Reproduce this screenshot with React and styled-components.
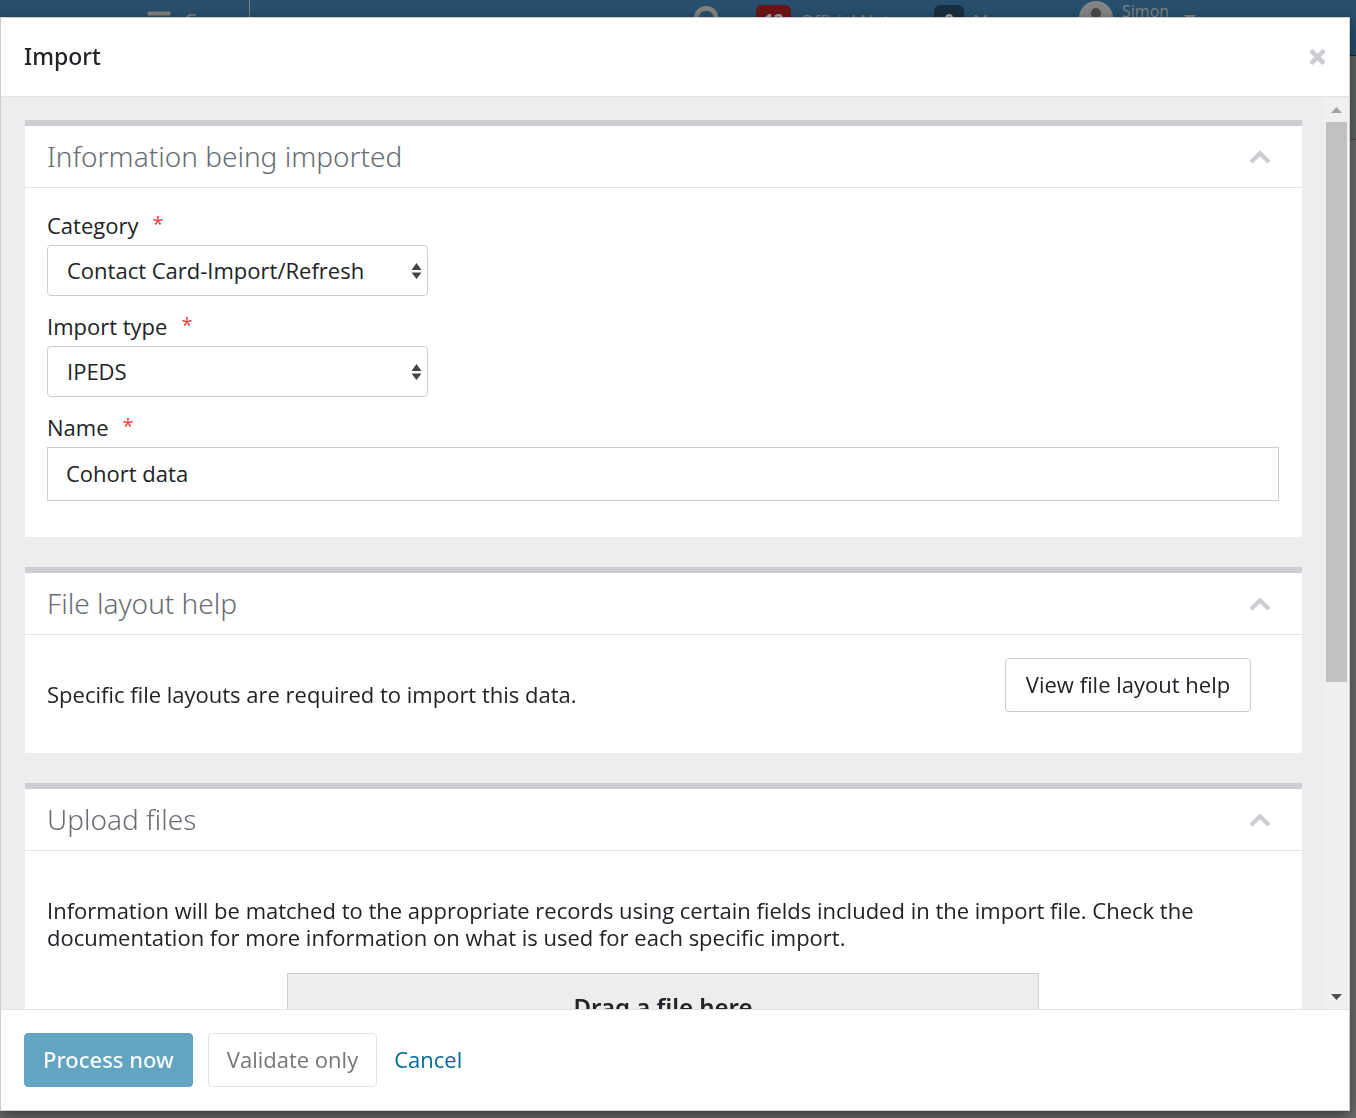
import styled, { createGlobalStyle } from "styled-components";
import { FaUser, FaSearch } from "react-icons/fa";

const GlobalStyle = createGlobalStyle`
    * {
        box-sizing: border-box;
    }

    body {
        margin: 0;
        overflow: hidden;
        background-color: #6f6f6f;
        color: #212327;
        font-family: "Open Sans", "Noto Sans", sans-serif;
        font-size: 22px;
        line-height: 27px;
    }

    button,
    input,
    select {
        font: inherit;
        color: inherit;
    }

    h1,
    h2,
    p {
        margin: 0;
    }
`;

const Topbar = styled.header`
    display: flex;
    justify-content: space-between;

    height: 56px;
    border-bottom: 1px solid #0f2c40;

    background-color: #28506e;
    color: #85837f;
    font-size: 17px;
    line-height: 20px;
`;

const MenuToggle = styled.button`
    display: flex;
    align-items: center;
    gap: 12px;

    width: 250px;
    height: 55px;
    padding: 0 0 13px 147px;
    border: none;
    border-right: 1px solid #85837f;

    background: none;
    font-size: 22px;
    overflow: hidden;
`;

const TopbarTools = styled.nav`
    display: grid;
    grid-template-columns: 62px 178px 145px 277px;
    align-items: center;

    height: 42px;
`;

const Tool = styled.a`
    display: flex;
    align-items: center;
    gap: 9px;

    color: inherit;
    text-decoration: none;
    white-space: nowrap;
`;

const Badge = styled.span`
    padding: 6px 8px;
    min-width: 30px;
    border-radius: 6px;

    background-color: ${(p) => (p.$alert ? "#6e1515" : "#192f40")};
    color: #a5a5a5;
    font-weight: bold;
    text-align: center;
`;

const Avatar = styled.span`
    display: flex;
    align-items: center;
    justify-content: center;

    width: 34px;
    height: 34px;
    border-radius: 50%;
    margin-bottom: 6px;

    background-color: #858585;
    color: #484848;
    font-size: 20px;
`;

const UserName = styled.span`
    height: 40px;

    font-size: 16px;
`;

const Caret = styled.svg`
    margin: 0 0 6px 6px;
`;

const SubHeader = styled.div`
    height: 84px;
    border-bottom: 1px solid #464b4b;

    background-color: #646866;
`;

const Overlay = styled.div`
    position: fixed;
    inset: 0;

    display: flex;
    padding: 17px 6px 7px 0;
`;

const Modal = styled.div`
    display: flex;
    flex-direction: column;
    flex: 1;
    min-width: 0;

    border: 1px solid #cdced3;

    background-color: #fff;
    box-shadow: 0 5px 15px rgba(0, 0, 0, 0.5);
`;

const ModalHeader = styled.div`
    display: flex;
    align-items: center;
    justify-content: space-between;

    height: 79px;
    padding: 0 23px;
    border-bottom: 1px solid #e2e3e4;
`;

const ModalTitle = styled.h1`
    padding-bottom: 2px;

    font-family: "Noto Sans", sans-serif;
    font-size: 23px;
    font-weight: 500;
`;

const IconButton = styled.button`
    display: flex;
    padding: 0;
    border: none;

    background: none;
    color: #cdced3;

    cursor: pointer;
`;

const ModalBody = styled.div`
    display: flex;
    flex: 1;
    min-height: 0;
`;

const Content = styled.div`
    display: flex;
    flex-direction: column;
    gap: 30px;
    flex: 1;

    padding: 23px 22px 0 24px;

    background-color: #ededed;
    overflow: hidden;
`;

const Card = styled.section`
    flex-shrink: 0;

    border-top: 6px solid #cdced3;

    background-color: #fff;
`;

const CardHeader = styled.div`
    display: flex;
    align-items: center;
    justify-content: space-between;

    height: 62px;
    padding: 0 31px 0 22px;
    border-bottom: 1px solid #e2e3e4;
`;

const CardTitle = styled.h2`
    color: #686c73;
    font-family: "Noto Sans", sans-serif;
    font-size: 28px;
    font-weight: 300;
`;

const Fields = styled.div`
    display: flex;
    flex-direction: column;
    gap: 17px;

    padding: 24px 23px 36px 22px;
`;

const FieldWrapper = styled.div`
    display: flex;
    flex-direction: column;
    gap: 6px;
`;

const Required = styled.span`
    margin-left: 14px;

    color: #ef4044;
    font-size: 20px;
    line-height: 0;
    vertical-align: 3px;
`;

const SelectBox = styled.div`
    display: grid;
    align-items: center;

    width: 381px;

    > * {
        grid-area: 1 / 1;
    }

    svg {
        justify-self: end;
        margin-right: 6px;
        pointer-events: none;
    }
`;

const Select = styled.select`
    height: 51px;
    padding: 0 19px;
    border: 1px solid #cdced3;
    border-radius: 4px;

    background-color: #fff;
    appearance: none;
`;

const TextInput = styled.input`
    height: 54px;
    padding: 0 18px 2px;
    border: 1px solid #cdced3;
`;

const HelpRow = styled.div`
    display: flex;
    align-items: flex-start;
    justify-content: space-between;

    padding: 23px 51px 41px 22px;

    p {
        margin-top: 23px;
    }
`;

const Upload = styled.div`
    display: flex;
    flex-direction: column;
    gap: 22px;

    padding: 46px 23px 46px 22px;
`;

const DropZone = styled.div`
    height: 180px;
    margin: 0 240px;
    padding: 19px;
    border: 1px solid #cdced3;

    background-color: #ededed;
    font-family: "Noto Sans", sans-serif;
    font-size: 24px;
    font-weight: 600;
    text-align: center;
`;

const Scrollbar = styled.div`
    display: flex;
    flex-direction: column;

    width: 25px;
    padding: 0 2px 0 1px;

    background-color: #f0f0f0;
`;

const ScrollArrow = styled.div`
    display: flex;
    align-items: center;
    justify-content: center;

    height: 25px;

    color: ${(p) => (p.$disabled ? "#a3a3a3" : "#505050")};
`;

const ScrollTrack = styled.div`
    display: flex;
    flex: 1;
    flex-direction: column;
`;

const ScrollThumb = styled.div`
    height: 65%;
    margin-left: 1px;

    background-color: #c1c1c1;
`;

const ModalFooter = styled.div`
    display: flex;
    align-items: center;
    gap: 15px;

    height: 101px;
    padding: 0 23px;
    border-top: 1px solid #e2e3e4;
`;

const Button = styled.button`
    height: 54px;
    min-width: ${(p) => (p.$wide ? "246px" : "168px")};
    padding: 0 18px 2px;
    border: 1px solid #cdced3;
    border-radius: 4px;

    background-color: #fff;
    white-space: nowrap;

    cursor: pointer;

    &:disabled {
        border-color: #e2e3e4;
        color: #757779;
        cursor: default;
    }
`;

const PrimaryButton = styled(Button)`
    background-color: #61a5c2;
    font-family: "Noto Sans", sans-serif;
    font-weight: 500;

    &:disabled {
        border-color: #61a5c2;
        color: #f7fafc;
    }
`;

const CancelButton = styled.button`
    padding: 0 2px 2px;
    border: none;

    background: none;
    color: #006a9c;

    cursor: pointer;
`;

function CloseIcon() {
    return (
        <svg width="17" height="16" viewBox="0 0 17 16" aria-hidden="true">
            <path
                d="M3.4 2.9 13.6 13.1M13.6 2.9 3.4 13.1"
                fill="none"
                stroke="currentColor"
                strokeWidth="4.8"
                strokeLinecap="round"
            />
        </svg>
    );
}

function Chevron() {
    return (
        <svg width="22" height="14" viewBox="0 0 22 14" aria-hidden="true">
            <path
                d="M2 12.2 11 3.2 20 12.2"
                fill="none"
                stroke="currentColor"
                strokeWidth="4.2"
            />
        </svg>
    );
}

function MenuIcon() {
    return (
        <svg width="24" height="21" viewBox="0 0 24 21" aria-hidden="true">
            <path
                d="M1 1h22v3H1zM1 9h22v3H1zM1 17h22v3H1z"
                fill="#85837f"
                stroke="#85837f"
                strokeLinejoin="round"
            />
        </svg>
    );
}

function Panel({ title, children }) {
    return (
        <Card>
            <CardHeader>
                <CardTitle>{title}</CardTitle>
                <IconButton type="button" aria-label={`Collapse ${title}`}>
                    <Chevron />
                </IconButton>
            </CardHeader>
            {children}
        </Card>
    );
}

function Field({ id, label, children }) {
    return (
        <FieldWrapper>
            <label htmlFor={id}>
                {label}
                <Required>*</Required>
            </label>
            {children}
        </FieldWrapper>
    );
}

function SelectField({ id, label, value }) {
    return (
        <Field id={id} label={label}>
            <SelectBox>
                <Select id={id} defaultValue={value}>
                    <option>{value}</option>
                </Select>
                <svg width="11" height="16" viewBox="0 0 11 16" aria-hidden="true">
                    <path d="M5.5 0 10.5 7H.5zM5.5 16 .5 9.5h10z" fill="#444" />
                </svg>
            </SelectBox>
        </Field>
    );
}

export default function App() {
    return (
        <>
            <GlobalStyle />

            <Topbar>
                <MenuToggle type="button" tabIndex={-1}>
                    <MenuIcon /> C
                </MenuToggle>
                <TopbarTools>
                    <Tool href="#search" aria-label="Search">
                        <FaSearch size={30} />
                    </Tool>
                    <Tool href="#notes">
                        <Badge $alert>12</Badge> Official Notes
                    </Tool>
                    <Tool href="#messages">
                        <Badge>0</Badge> M
                    </Tool>
                    <Tool href="#profile">
                        <Avatar>
                            <FaUser />
                        </Avatar>
                        <UserName>Simon</UserName>
                        <Caret width="12" height="7" viewBox="0 0 12 7" aria-hidden="true">
                            <path d="M0 0h12L6 7z" fill="currentColor" />
                        </Caret>
                    </Tool>
                </TopbarTools>
            </Topbar>
            <SubHeader />

            <Overlay>
                <Modal role="dialog" aria-modal="true" aria-labelledby="modal-title">
                    <ModalHeader>
                        <ModalTitle id="modal-title">Import</ModalTitle>
                        <IconButton type="button" aria-label="Close">
                            <CloseIcon />
                        </IconButton>
                    </ModalHeader>

                    <ModalBody>
                        <Content>
                            <Panel title="Information being imported">
                                <Fields>
                                    <SelectField
                                        id="category"
                                        label="Category"
                                        value="Contact Card-Import/Refresh"
                                    />
                                    <SelectField
                                        id="import-type"
                                        label="Import type"
                                        value="IPEDS"
                                    />
                                    <Field id="name" label="Name">
                                        <TextInput id="name" defaultValue="Cohort data" />
                                    </Field>
                                </Fields>
                            </Panel>

                            <Panel title="File layout help">
                                <HelpRow>
                                    <p>Specific file layouts are required to import this data.</p>
                                    <Button type="button" $wide>
                                        View file layout help
                                    </Button>
                                </HelpRow>
                            </Panel>

                            <Panel title="Upload files">
                                <Upload>
                                    <p>
                                        Information will be matched to the appropriate records
                                        using certain fields included in the import file. Check
                                        the documentation for more information on what is used
                                        for each specific import.
                                    </p>
                                    <DropZone>Drag a file here</DropZone>
                                </Upload>
                            </Panel>
                        </Content>

                        <Scrollbar aria-hidden="true">
                            <ScrollArrow $disabled>
                                <svg width="11" height="6" viewBox="0 0 11 6">
                                    <path d="M5.5 0 11 6H0z" fill="currentColor" />
                                </svg>
                            </ScrollArrow>
                            <ScrollTrack>
                                <ScrollThumb />
                            </ScrollTrack>
                            <ScrollArrow>
                                <svg width="11" height="6" viewBox="0 0 11 6">
                                    <path d="M0 0h11L5.5 6z" fill="currentColor" />
                                </svg>
                            </ScrollArrow>
                        </Scrollbar>
                    </ModalBody>

                    <ModalFooter>
                        <PrimaryButton type="button" disabled>
                            Process now
                        </PrimaryButton>
                        <Button type="button" disabled>
                            Validate only
                        </Button>
                        <CancelButton type="button">Cancel</CancelButton>
                    </ModalFooter>
                </Modal>
            </Overlay>
        </>
    );
}
